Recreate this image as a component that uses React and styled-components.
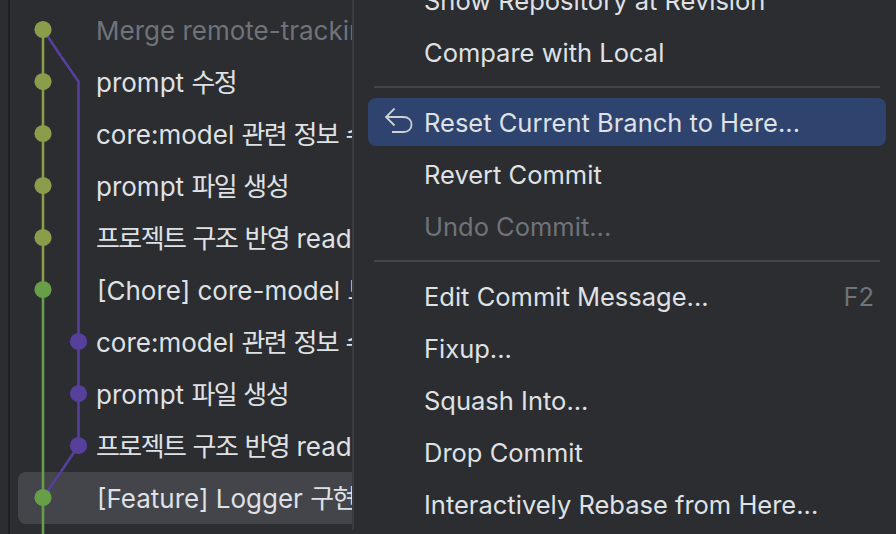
import React from 'react';
import styled, { createGlobalStyle } from 'styled-components';

const OLIVE = '#8a9d4b';
const GREEN = '#689e48';
const PURPLE = '#573f9c';
const LEFT = 25;
const RIGHT = 60.5;
const MID = 25.5;

const vLeft = `M${LEFT} 0V52`;
const vRight = `M${RIGHT} 0V52`;

const commits = [
  {
    text: 'Merge remote-tracking branch',
    dim: true,
    dot: [LEFT, OLIVE],
    lines: [
      [`M${LEFT} ${MID}V52`, OLIVE],
      [`M${LEFT} ${MID}L42.75 52`, PURPLE],
    ],
  },
  {
    text: 'prompt 수정',
    dot: [LEFT, OLIVE],
    lines: [
      [vLeft, OLIVE],
      [`M42.75 0L${RIGHT} ${MID}V52`, PURPLE],
    ],
  },
  { text: 'core:model 관련 정보 수정', dot: [LEFT, OLIVE], lines: [[vLeft, OLIVE], [vRight, PURPLE]] },
  { text: 'prompt 파일 생성', dot: [LEFT, OLIVE], lines: [[vLeft, OLIVE], [vRight, PURPLE]] },
  { text: '프로젝트 구조 반영 readme', dot: [LEFT, OLIVE], lines: [[vLeft, OLIVE], [vRight, PURPLE]] },
  {
    text: '[Chore] core-model 모듈',
    inset: true,
    dot: [LEFT, GREEN],
    lines: [
      [`M${LEFT} 0V${MID}`, OLIVE],
      [`M${LEFT} ${MID}V52`, GREEN],
      [vRight, PURPLE],
    ],
  },
  { text: 'core:model 관련 정보 수정', dot: [RIGHT, PURPLE], lines: [[vLeft, GREEN], [vRight, PURPLE]] },
  { text: 'prompt 파일 생성', dot: [RIGHT, PURPLE], lines: [[vLeft, GREEN], [vRight, PURPLE]] },
  {
    text: '프로젝트 구조 반영 readme',
    dot: [RIGHT, PURPLE],
    lines: [
      [vLeft, GREEN],
      [`M${RIGHT} 0V${MID}L42.75 52`, PURPLE],
    ],
  },
  {
    text: '[Feature] Logger 구현',
    inset: true,
    selected: true,
    dot: [LEFT, GREEN],
    lines: [
      [vLeft, GREEN],
      [`M42.75 0L${LEFT} ${MID}`, PURPLE],
    ],
  },
  { text: '', dot: null, lines: [[vLeft, GREEN]] },
];

const ResetIcon = () => (
  <svg width="30" height="28" viewBox="0 0 30 28" fill="none">
    <path
      d="M10.5 0.5L2 9L10.5 17.5M2 9H19.5C24.5 9 27.5 12 27.5 16.5C27.5 21 24.5 24 19.5 24H8"
      stroke="#ced0d6"
      strokeWidth="1.8"
    />
  </svg>
);

const Graph = ({ dot, lines }) => (
  <GraphCell viewBox="0 0 78 52">
    {lines.map(([d, color], i) => (
      <path key={i} d={d} stroke={color} strokeWidth="2.6" fill="none" />
    ))}
    {dot && <circle cx={dot[0]} cy={MID} r="8.6" fill={dot[1]} />}
  </GraphCell>
);

// hangul runs get tighter tracking than the latin around them
const withHangul = (text) =>
  text.split(/([가-힣]+)/).map((part, i) => (i % 2 ? <Hangul key={i}>{part}</Hangul> : part));

const App = () => (
  <Page>
    <GlobalStyle />
    <Gutter />
    <CommitList>
      {commits.map((c, i) => (
        <CommitRow key={i} $selected={c.selected}>
          <Graph dot={c.dot} lines={c.lines} />
          <CommitText $dim={c.dim} $inset={c.inset}>{withHangul(c.text)}</CommitText>
        </CommitRow>
      ))}
    </CommitList>

    <Menu>
      <MenuItem>Show Repository at Revision</MenuItem>
      <MenuItem>Compare with Local</MenuItem>
      <Separator />
      <MenuItem $active icon={<ResetIcon />}>Reset Current Branch to Here...</MenuItem>
      <MenuItem>Revert Commit</MenuItem>
      <MenuItem $disabled>Undo Commit...</MenuItem>
      <Separator />
      <MenuItem shortcut="F2">Edit Commit Message...</MenuItem>
      <MenuItem>Fixup...</MenuItem>
      <MenuItem>Squash Into...</MenuItem>
      <MenuItem>Drop Commit</MenuItem>
      <MenuItem>Interactively Rebase from Here...</MenuItem>
    </Menu>
  </Page>
);

const MenuItem = ({ icon, shortcut, children, $active, $disabled }) => (
  <ItemOuter>
    <ItemInner $active={$active}>
      <ItemIcon>{icon}</ItemIcon>
      <ItemLabel $disabled={$disabled}>{children}</ItemLabel>
      {shortcut && <Shortcut>{shortcut}</Shortcut>}
    </ItemInner>
  </ItemOuter>
);

const GlobalStyle = createGlobalStyle`
  html, body {
    margin: 0;
    padding: 0;
    background: #2b2d30;
  }
`;

const Page = styled.div`
  position: relative;
  display: flex;
  width: 896px;
  height: 534px;
  overflow: hidden;
  background: #2b2d30;
  font-family: Inter, "Noto Sans CJK KR", sans-serif;
  font-size: 25.5px;
  line-height: 30px;
`;

const Gutter = styled.div`
  flex: none;
  width: 8px;
  height: 100%;
  background: #2b2d30;
  border-right: 2px solid #1e1f22;
`;

const CommitList = styled.div`
  flex: none;
  display: flex;
  flex-direction: column;
  width: 335px;
  margin-left: 8px;
  padding-top: 4px;
`;

const CommitRow = styled.div`
  flex: none;
  display: flex;
  align-items: center;
  height: 52px;
  border-radius: 8px 0 0 8px;
  background: ${(p) => (p.$selected ? '#43454a' : 'transparent')};
`;

const GraphCell = styled.svg`
  flex: none;
  display: block;
  width: 78px;
  height: 52px;
`;

const CommitText = styled.span`
  margin-left: ${(p) => (p.$inset ? '1px' : '0')};
  padding-top: 2px;
  font-size: 26px;
  white-space: nowrap;
  color: ${(p) => (p.$dim ? '#6f737a' : '#dfe1e5')};
`;

const Hangul = styled.span`
  letter-spacing: -1.6px;
`;

const Menu = styled.div`
  position: absolute;
  top: -26px;
  left: 352px;
  right: 0;
  display: flex;
  flex-direction: column;
  background: #2b2d30;
  border-left: 2px solid #393b40;
  box-sizing: border-box;
`;

const ItemOuter = styled.div`
  flex: none;
  height: 52px;
  padding: 2px 10px 2px 14px;
  box-sizing: border-box;
`;

const ItemInner = styled.div`
  display: grid;
  grid-template-columns: 56px 1fr auto;
  align-items: center;
  height: 48px;
  padding-right: 12px;
  border-radius: 8px;
  background: ${(p) => (p.$active ? '#2e436e' : 'transparent')};
`;

const ItemIcon = styled.span`
  display: flex;
  padding-left: 16px;
`;

const ItemLabel = styled.span`
  padding-top: 2px;
  white-space: nowrap;
  color: ${(p) => (p.$disabled ? '#6f737a' : '#dfe1e5')};
`;

const Shortcut = styled.span`
  padding-top: 2px;
  color: #6f737a;
`;

const Separator = styled.div`
  flex: none;
  box-sizing: border-box;
  height: 18px;
  padding: 8px 16px 0 20px;

  &::before {
    content: '';
    display: block;
    height: 2px;
    background: #43454a;
  }
`;

export default App;
